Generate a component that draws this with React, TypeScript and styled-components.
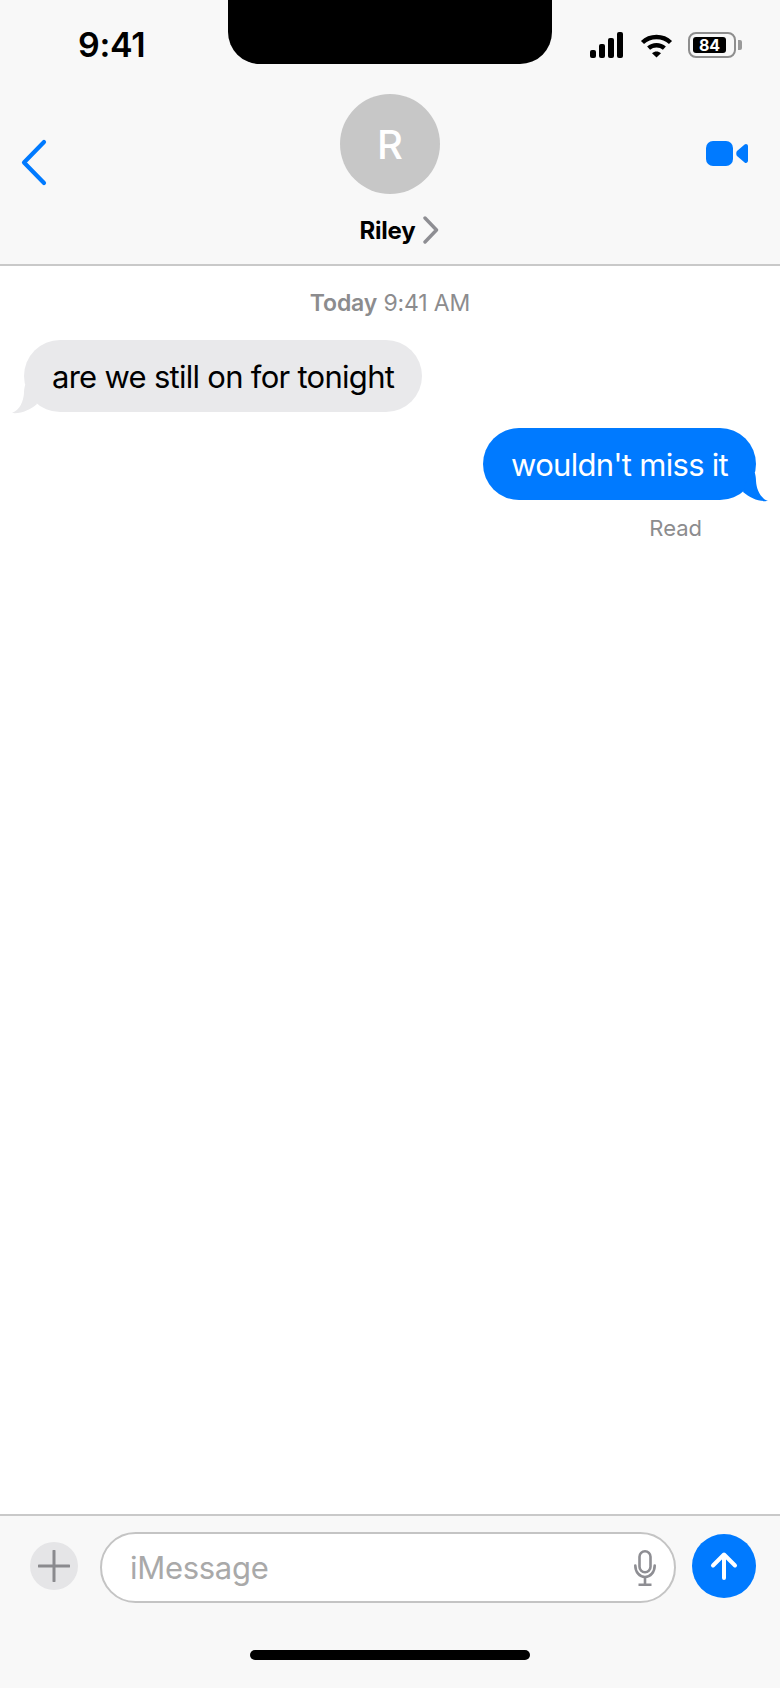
import styled, { createGlobalStyle } from 'styled-components';

const GlobalStyle = createGlobalStyle`
  html, body {
    margin: 0;
    padding: 0;
    background: #fff;
  }
  body {
    font-family: Inter, "Liberation Sans", sans-serif;
  }
  * {
    box-sizing: border-box;
  }
`;

const Screen = styled.div`
  position: relative;
  display: flex;
  flex-direction: column;
  width: 780px;
  height: 1688px;
  overflow: hidden;
  background: #fff;
`;

const Header = styled.header`
  display: flex;
  flex-direction: column;
  height: 266px;
  background: #f8f8f8;
  border-bottom: 2px solid #c9c9c9;
`;

const StatusBar = styled.div`
  display: flex;
  justify-content: space-between;
  height: 94px;
  padding: 24px 38px 0 78px;
`;

const Clock = styled.span`
  font-size: 34px;
  line-height: 41px;
  font-weight: 600;
  letter-spacing: -0.3px;
  color: #000;
`;

const Notch = styled.div`
  position: absolute;
  top: 0;
  left: 228px;
  width: 324px;
  height: 64px;
  background: #000;
  border-radius: 0 0 32px 32px;
`;

const StatusIcons = styled.div`
  display: flex;
  align-items: flex-start;
  gap: 15px;
  padding-top: 8px;

  > svg:first-child {
    margin-right: 2px;
  }
`;

const Battery = styled.div`
  display: flex;
  align-items: center;
  gap: 2px;
`;

const BatteryBody = styled.div`
  display: flex;
  align-items: center;
  width: 48px;
  height: 26px;
  padding: 3px;
  border: 2px solid #8e8e8e;
  border-radius: 8px;
`;

const BatteryLevel = styled.div`
  display: flex;
  align-items: center;
  justify-content: center;
  width: 33px;
  height: 100%;
  background: #000;
  border-radius: 3px;
  color: #fff;
  font-size: 16px;
  font-weight: 700;
  line-height: 1;
`;

const BatteryTip = styled.div`
  width: 4px;
  height: 10px;
  background: #9a9a9a;
  border-radius: 0 2px 2px 0;
`;

const Nav = styled.nav`
  display: grid;
  grid-template-columns: 1fr auto 1fr;
  padding: 0 21px;
`;

const BackIcon = styled.svg`
  margin-top: 44px;
`;

const VideoIcon = styled.svg`
  justify-self: end;
  margin: 47px 11px 0 0;
`;

const Contact = styled.div`
  display: flex;
  flex-direction: column;
  align-items: center;
  gap: 22px;
`;

const Avatar = styled.div`
  display: flex;
  align-items: center;
  justify-content: center;
  width: 100px;
  height: 100px;
  background: #c7c7c7;
  border-radius: 50%;
  color: #fff;
  font-size: 40px;
  font-weight: 500;
`;

const NameRow = styled.div`
  display: flex;
  align-items: center;
  gap: 7px;
  margin-left: 18px;
  height: 28px;
`;

const Name = styled.span`
  font-size: 24px;
  font-weight: 700;
  letter-spacing: -0.2px;
  color: #000;
`;

const Thread = styled.main`
  flex: 1;
  display: flex;
  flex-direction: column;
  padding: 24px 24px 0;
`;

const Timestamp = styled.div`
  text-align: center;
  font-size: 23px;
  line-height: 26px;
  letter-spacing: -0.15px;
  color: #8c8c8e;
  margin-bottom: 24px;

  b {
    font-weight: 600;
  }
`;

const Bubble = styled.div<{ $mine?: boolean }>`
  position: relative;
  align-self: ${(p) => (p.$mine ? 'flex-end' : 'flex-start')};
  height: 72px;
  padding: 0 28px;
  margin-bottom: 16px;
  border-radius: 36px;
  background: ${(p) => (p.$mine ? '#007aff' : '#e9e9eb')};
  color: ${(p) => (p.$mine ? '#fff' : '#000')};
  font-size: 31px;
  line-height: 74px;
  letter-spacing: -0.72px;
  white-space: nowrap;
`;

const Tail = styled.svg<{ $mine?: boolean }>`
  position: absolute;
  bottom: -3px;
  ${(p) => (p.$mine ? 'right: -12px;' : 'left: -12px;')}
`;

const Receipt = styled.div`
  align-self: flex-end;
  margin: -1px 54px 0 0;
  font-size: 22px;
  line-height: 26px;
  color: #8c8c8e;
`;

const Composer = styled.footer`
  display: flex;
  flex-direction: column;
  height: 174px;
  background: #f8f8f8;
  border-top: 2px solid #c9c9c9;
`;

const ComposerRow = styled.div`
  display: flex;
  align-items: center;
  height: 71px;
  margin-top: 16px;
  padding: 0 24px 0 30px;
`;

const PlusButton = styled.div`
  display: flex;
  align-items: center;
  justify-content: center;
  width: 48px;
  height: 48px;
  margin: 0 22px 3px 0;
  background: #e5e5e7;
  border-radius: 50%;
`;

const InputPill = styled.div`
  display: flex;
  align-items: center;
  justify-content: space-between;
  width: 576px;
  height: 71px;
  padding: 0 18px 0 28px;
  margin-right: 16px;
  background: #fff;
  border: 2px solid #c4c4c4;
  border-radius: 36px;
`;

const Placeholder = styled.span`
  font-size: 31px;
  letter-spacing: -0.3px;
  color: #a9a9a9;
`;

const SendButton = styled.div`
  display: flex;
  align-items: center;
  justify-content: center;
  width: 64px;
  height: 64px;
  margin-bottom: 3px;
  background: #007aff;
  border-radius: 50%;
`;

const HomeIndicator = styled.div`
  align-self: center;
  width: 280px;
  height: 10px;
  margin-top: 47px;
  background: #000;
  border-radius: 5px;
`;

const SignalIcon = () => (
  <svg width="33" height="26" viewBox="0 0 33 26" fill="#000">
    <rect x="0" y="18" width="6" height="8" rx="2" />
    <rect x="9" y="12" width="6" height="14" rx="2" />
    <rect x="18" y="6" width="6" height="20" rx="2" />
    <rect x="27" y="0" width="6" height="26" rx="2" />
  </svg>
);

const WifiIcon = () => (
  <svg width="33" height="26" viewBox="0 0 33 26" fill="none">
    <path d="M2.5 10.5C10 3.2 23 3.2 30.5 10.5" stroke="#000" strokeWidth="4.4" strokeLinecap="butt" />
    <path d="M8.6 16.2C13 12.2 20 12.2 24.4 16.2" stroke="#000" strokeWidth="4.4" strokeLinecap="butt" />
    <path d="M12 21.3C14.8 18.8 18.2 18.8 21 21.3L16.5 25.6Z" fill="#000" />
  </svg>
);

const App = () => {
  return (
    <Screen>
      <GlobalStyle />
      <Header>
        <StatusBar>
          <Clock>9:41</Clock>
          <StatusIcons>
            <SignalIcon />
            <WifiIcon />
            <Battery>
              <BatteryBody>
                <BatteryLevel>84</BatteryLevel>
              </BatteryBody>
              <BatteryTip />
            </Battery>
          </StatusIcons>
        </StatusBar>
        <Notch />
        <Nav>
          <BackIcon width="26" height="48" viewBox="0 0 26 48" fill="none">
            <path d="M23 4L3 24.5L23 45" stroke="#007aff" strokeWidth="4.2" strokeLinecap="round" strokeLinejoin="round" />
          </BackIcon>
          <Contact>
            <Avatar>R</Avatar>
            <NameRow>
              <Name>Riley</Name>
              <svg width="16" height="28" viewBox="0 0 16 28" fill="none">
                <path d="M2 2L13.5 14L2 26" stroke="#8e8e93" strokeWidth="3.4" strokeLinecap="round" strokeLinejoin="round" />
              </svg>
            </NameRow>
          </Contact>
          <VideoIcon width="42" height="25" viewBox="0 0 42 25" fill="#007aff">
            <rect x="0" y="0" width="27" height="25" rx="7" />
            <path d="M31 10L38.6 3.6C40 2.4 42 3.4 42 5.2V19.8C42 21.6 40 22.6 38.6 21.4L31 15C30 13.8 30 11.2 31 10Z" />
          </VideoIcon>
        </Nav>
      </Header>

      <Thread>
        <Timestamp>
          <b>Today</b> 9:41 AM
        </Timestamp>
        <Bubble>
          are we still on for tonight
          <Tail width="27" height="30" viewBox="0 0 27 30" fill="#e9e9eb">
            <path d="M19 0H13.1C12.4 3 12 5 12 8C11.5 16 8 25 0 28C9 29 18 25 25 19Z" />
          </Tail>
        </Bubble>
        <Bubble $mine>
          wouldn't miss it
          <Tail $mine width="27" height="30" viewBox="0 0 27 30" fill="#007aff">
            <path d="M8 0H13.9C14.6 3 15 5 15 8C15.5 16 19 25 27 28C18 29 9 25 2 19Z" />
          </Tail>
        </Bubble>
        <Receipt>Read</Receipt>
      </Thread>

      <Composer>
        <ComposerRow>
          <PlusButton>
            <svg width="32" height="32" viewBox="0 0 32 32" fill="none">
              <path d="M16 1V31M1 16H31" stroke="#8a8a8e" strokeWidth="3" strokeLinecap="round" />
            </svg>
          </PlusButton>
          <InputPill>
            <Placeholder>iMessage</Placeholder>
            <svg width="22" height="36" viewBox="0 0 22 36" fill="none" stroke="#8e8e93" strokeWidth="2.6">
              <rect x="5.5" y="1.3" width="11" height="21" rx="5.5" />
              <path d="M1.3 15.5C1.3 22 5.5 27 11 27C16.5 27 20.7 22 20.7 15.5" strokeLinecap="round" />
              <path d="M11 27V34.5M4.5 34.7H17.5" />
            </svg>
          </InputPill>
          <SendButton>
            <svg width="28" height="30" viewBox="0 0 28 30" fill="none">
              <path d="M14 27V4M3 14.5L14 3.5L25 14.5" stroke="#fff" strokeWidth="4" strokeLinecap="round" strokeLinejoin="round" />
            </svg>
          </SendButton>
        </ComposerRow>
        <HomeIndicator />
      </Composer>
    </Screen>
  );
};

export default App;
